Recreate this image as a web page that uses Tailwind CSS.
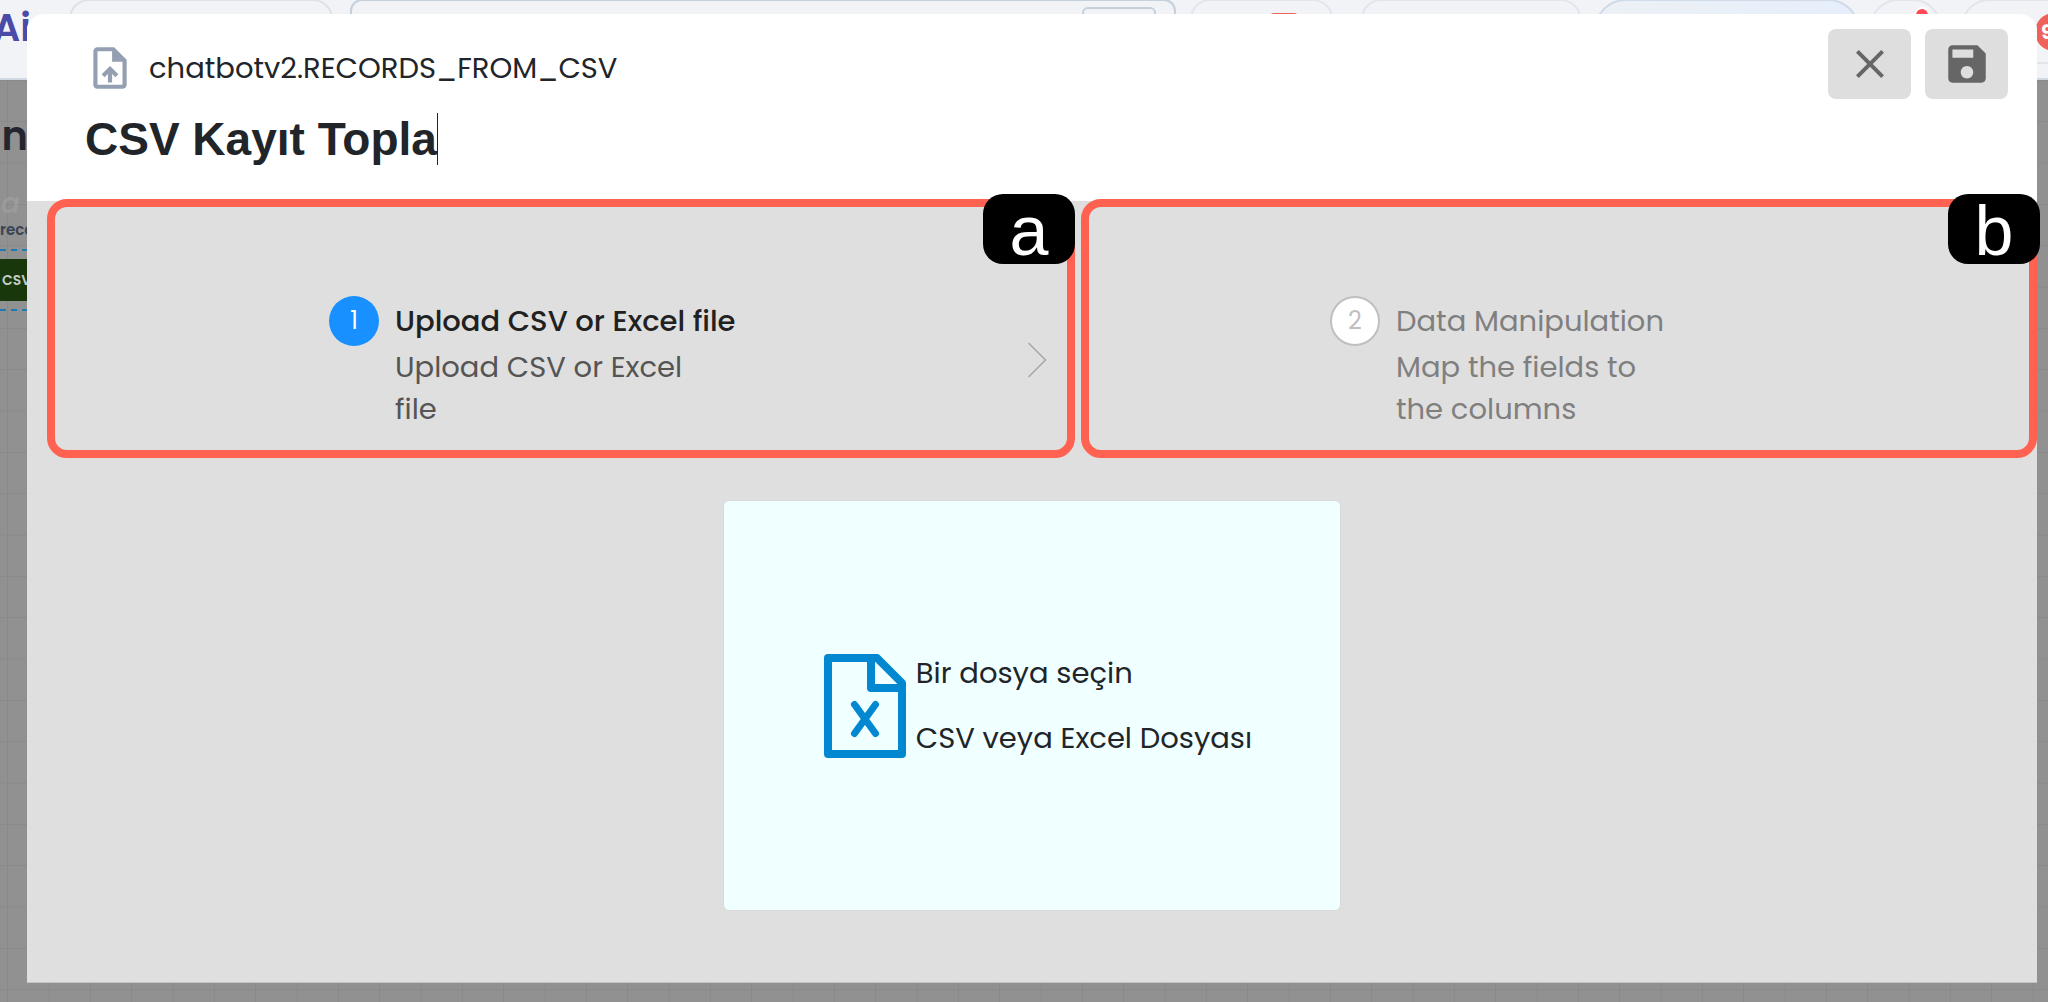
<!DOCTYPE html>
<html lang="tr">
<head>
    <meta charset="UTF-8">
    <meta name="viewport" content="width=device-width, initial-scale=1.0">
    <title>CSV Kayıt Topla</title>
    <script src="https://cdn.jsdelivr.net/npm/@tailwindcss/browser@4"></script>
    <style>
        body {
            font-family: 'Poppins', 'Inter', sans-serif;
        }
    </style>
</head>
<body class="relative h-screen overflow-hidden bg-[#919191] text-[#212529]">

    <!-- Page behind the dialog -->
    <div class="flex h-full flex-col" aria-hidden="true">
        <header class="flex h-20 shrink-0 items-start overflow-hidden border-b-2 border-[#cfd8e3] bg-[#f2f3f7]">
            <div class="flex h-16 w-full min-w-0 items-start">
                <span class="w-[69px] shrink-0 pt-2 text-[38px] leading-10 font-semibold text-[#4a4aa8]"><span class="-ml-[7px]">Ai</span></span>
                <div class="-mt-px h-16 w-[264px] shrink-0 rounded-[20px] border-2 border-[#dfe1e6]"></div>
                <div class="-mt-px ml-[17px] flex h-16 min-w-0 flex-1 justify-end rounded-xl border-2 border-[#c5d0da] pt-[6px] pr-[18px]">
                    <div class="h-10 w-[74px] rounded-md border-2 border-[#c5d0da]"></div>
                </div>
                <div class="-mt-px ml-[14px] flex h-16 w-[143px] shrink-0 justify-center rounded-[20px] border-2 border-[#e3e5ed] pt-3">
                    <div class="ml-11 h-8 w-7 rounded-sm bg-[#ef6461]"></div>
                </div>
                <div class="-mt-px ml-7 h-16 w-[220px] shrink-0 rounded-[20px] border-2 border-[#e3e5ed]"></div>
                <div class="-mt-px ml-[13px] h-16 w-[266px] shrink-0 rounded-[32px] border-2 border-[#cfdbe8] bg-gradient-to-r from-[#edf1f5] to-[#e6eefb]"></div>
                <div class="-mt-px ml-[10px] flex h-16 w-[71px] shrink-0 justify-center rounded-[28px] border-2 border-[#e3e5ed] pt-[6px]">
                    <div class="ml-8 size-4 rounded-full border-2 border-white bg-[#ff4757]"></div>
                </div>
                <div class="-mt-px ml-5 flex h-[65px] w-[87px] shrink-0 rounded-l-[28px] border-y-2 border-l-2 border-[#e3e5ed] pt-3">
                    <div class="ml-[72px] flex size-[38px] shrink-0 items-center rounded-full bg-[#ee625c] pl-[6px] text-xl font-bold text-white">9</div>
                </div>
            </div>
        </header>
        <main class="relative min-h-0 flex-1">
            <svg class="absolute inset-0 size-full" xmlns="http://www.w3.org/2000/svg">
                <defs>
                    <pattern id="grid" width="124" height="124" x="7" y="41" patternUnits="userSpaceOnUse">
                        <path d="M.5 0V124M42 0V124M83.500 0V124M0 .5H124M0 42H124M0 83.500H124" stroke="#8a8a8a" stroke-width="1" fill="none" />
                    </pattern>
                </defs>
                <rect width="100%" height="100%" fill="url(#grid)" />
            </svg>
            <div class="relative w-7 overflow-hidden whitespace-nowrap">
                <div class="flex justify-end pt-8 text-[40px] leading-[48px] font-semibold text-[#24262f]">ın</div>
                <div class="mt-7 flex justify-end pr-2 text-[28px] leading-8 font-medium italic text-[#9b9b9b]">na</div>
                <div class="text-[15px] leading-5 font-semibold text-[#3b4453]">reco</div>
                <div class="mt-[9px] border-t-2 border-b-2 border-dashed border-[#1f7ab0] py-2">
                    <div class="h-[42px] bg-[#18370a] pl-0.5 text-sm leading-[42px] font-semibold text-[#c3ccc0]">CSV</div>
                </div>
            </div>
        </main>
    </div>

    <!-- Dialog -->
    <div class="absolute inset-0 flex flex-col pt-[14px] pr-[11px] pb-[19px] pl-[27px]">
        <div role="dialog" aria-label="CSV Kayıt Topla" class="flex flex-1 flex-col rounded-t-2xl border-b border-[#c4c4c4] bg-[#dfdfdf]">
            <div class="flex h-[187px] items-start justify-between rounded-t-2xl bg-white pt-[15px] pr-[29px] pl-[58px]">
                <div>
                    <div class="flex items-center gap-[14px] pt-[14px]">
                        <svg class="size-[50px]" viewBox="0 0 24 24" fill="#94a0b2">
                            <path fill-rule="evenodd" d="M14 2H6C4.900 2 4.010 2.900 4.010 4L4 20C4 21.100 4.890 22 5.990 22H18C19.100 22 20 21.100 20 20V8L14 2ZM18 20H6V4H13V9H18V20Z" />
                            <path d="M8 15.010L9.410 16.420L11 14.840V19H13V14.840L14.590 16.430L16 15.010L12.010 11L8 15.010Z" />
                        </svg>
                        <h2 class="text-[29px] leading-[42px]">chatbotv2.RECORDS_FROM_CSV</h2>
                    </div>
                    <input type="text" aria-label="Ad" value="CSV Kayıt Topla" class="mt-5 field-sizing-content border-r border-[#212529] font-['Liberation_Sans'] text-[46px] leading-[52px] font-bold outline-none">
                </div>
                <div class="flex gap-[14px]">
                    <button type="button" aria-label="Kapat" class="flex h-[70px] w-[83px] items-center justify-center rounded-lg bg-[#dedede]">
                        <svg class="size-12" viewBox="0 0 24 24" fill="#666"><path d="M19 6.410L17.590 5 12 10.590 6.410 5 5 6.410 10.590 12 5 17.590 6.410 19 12 13.410 17.590 19 19 17.590 13.410 12z" /></svg>
                    </button>
                    <button type="button" aria-label="Kaydet" class="flex h-[70px] w-[83px] items-center justify-center rounded-lg bg-[#dedede]">
                        <svg class="size-[50px]" viewBox="0 0 24 24" fill="#666"><path d="M17 3H5c-1.110 0-2 .9-2 2v14c0 1.100.89 2 2 2h14c1.100 0 2-.9 2-2V7l-4-4zm-5 16c-1.660 0-3-1.340-3-3s1.340-3 3-3 3 1.340 3 3-1.340 3-3 3zm3-10H5V5h10v4z" /></svg>
                    </button>
                </div>
            </div>

            <!-- Steps -->
            <ol class="-mt-[2px] grid grid-cols-[1028fr_956fr] gap-[6px] pl-5">
                <li class="relative flex h-[259px] min-w-0 items-start rounded-[20px] border-8 border-[#ff6250] pt-[89px] pr-5 pl-[274px]">
                    <span class="flex size-[50px] shrink-0 items-center justify-center rounded-full bg-[#1890ff] text-2xl text-white">1</span>
                    <div class="ml-4 pt-1 text-[29px] leading-[42px] text-[#555]">
                        <h3 class="font-medium text-[#212121]">Upload CSV or Excel file</h3>
                        <p class="mt-1 w-[310px]">Upload CSV or Excel file</p>
                    </div>
                    <svg class="mt-[46px] ml-auto h-9 w-5" viewBox="0 0 20 36" fill="none" stroke="#a6a6a6" stroke-width="1.500"><path d="M1.500 1L18.500 18L1.500 35" /></svg>
                    <span class="absolute -top-[13px] -right-[8px] flex h-[70px] w-[92px] items-center justify-center rounded-[20px] bg-black pt-1 font-['Liberation_Sans'] text-[70px] leading-none text-white">a</span>
                </li>
                <li class="relative flex h-[259px] min-w-0 items-start rounded-[20px] border-8 border-[#ff6250] pt-[89px] pl-[241px]">
                    <span class="flex size-[50px] shrink-0 items-center justify-center rounded-full border-2 border-[#bfbfbf] bg-white text-2xl text-[#bfbfbf]">2</span>
                    <div class="ml-4 pt-1 text-[29px] leading-[42px] text-[#7f7f7f]">
                        <h3>Data Manipulation</h3>
                        <p class="mt-1 w-[270px]">Map the fields to the columns</p>
                    </div>
                    <span class="absolute -top-[13px] -right-[11px] flex h-[70px] w-[92px] items-center justify-center rounded-[20px] bg-black pt-1 font-['Liberation_Sans'] text-[70px] leading-none text-white">b</span>
                </li>
            </ol>

            <!-- File picker -->
            <button type="button" class="mx-auto mt-[42px] flex h-[411px] w-[618px] items-center justify-center gap-[10px] rounded-md border border-[#d9d9d9] bg-[#f0ffff] pl-3 text-left">
                <svg class="h-[104px] w-[82px]" viewBox="0 0 82 104" fill="none" stroke="#0288d1" stroke-width="8" stroke-linejoin="round">
                    <path d="M4 4H53L78 29V100H4Z" />
                    <path d="M47 4V34H78" />
                    <path d="M30.500 50.500L51.500 79.500M51.500 50.500L30.500 79.500" stroke-width="7" stroke-linecap="round" />
                </svg>
                <span class="flex flex-col gap-[23px] text-[29px] leading-[42px]">
                    <span>Bir dosya seçin</span>
                    <span>CSV veya Excel Dosyası</span>
                </span>
            </button>
        </div>
    </div>
</body>
</html>
